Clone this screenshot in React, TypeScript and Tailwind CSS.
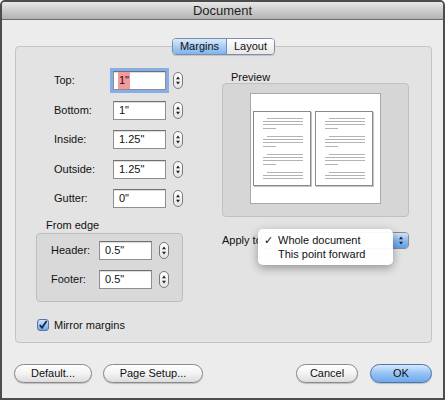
import React from "react";

function Stepper({ blue = false }: { blue?: boolean }) {
  return (
    <div
      className={
        blue
          ? "w-[16px] h-full flex items-center justify-center bg-linear-to-b from-[#cfe2f8] via-[#8cbaf0] to-[#5f9deb] border-l border-[#5d82b9]"
          : "w-[10px] h-[17px] rounded-[5px] border border-[#7a7a7a] bg-linear-to-b from-white to-[#e4e4e4] flex items-center justify-center shrink-0"
      }
    >
      <svg width="6" height="11" viewBox="0 0 6 11">
        <path d="M3 1.5 L5 4.2 L1 4.2 Z" fill="#222" />
        <path d="M3 9.5 L5 6.8 L1 6.8 Z" fill="#222" />
      </svg>
    </div>
  );
}

function Field({
  value,
  width = "w-[53px]",
  focused = false,
}: {
  value: string;
  width?: string;
  focused?: boolean;
}) {
  return (
    <div
      className={
        width +
        " h-[19px] bg-white border border-[#8f8f8f] border-t-[#6f6f6f] shadow-[inset_0_1px_1px_rgba(0,0,0,0.15)] flex items-center pl-[5px] text-[11px] text-[#111] shrink-0 " +
        (focused ? "ring-[3px] ring-[#85aee8] border-[#6d91c9]" : "")
      }
    >
      {focused ? <span className="bg-[#f29b9a] px-[1px] -ml-[1px]">{value}</span> : value}
    </div>
  );
}

function MarginRow({ label, value, focused }: { label: string; value: string; focused?: boolean }) {
  return (
    <div className="flex items-center">
      <span className="w-[59px] text-[11px] text-[#111]">{label}</span>
      <Field value={value} focused={focused} />
      <div className="ml-[7px]">
        <Stepper />
      </div>
    </div>
  );
}

function EdgeRow({ label, value }: { label: string; value: string }) {
  return (
    <div className="flex items-center">
      <span className="w-[48px] text-[11px] text-[#111]">{label}</span>
      <Field value={value} />
      <div className="ml-[7px]">
        <Stepper />
      </div>
    </div>
  );
}

function PageThumb() {
  const paras = [0, 18, 36, 54];
  return (
    <div className="w-[58px] h-[75px] bg-white border border-[#8a8a8a] shadow-[1px_1px_0_#c4c4c4]">
      <svg width="56" height="73" viewBox="0 0 56 73">
        {paras.map((y, i) => (
          <g key={i} stroke="#b3b3b3" strokeWidth="1">
            <line x1="13" y1={y + 6.5} x2="49" y2={y + 6.5} />
            <line x1="9" y1={y + 9.5} x2="49" y2={y + 9.5} />
            <line x1="9" y1={y + 12.5} x2="49" y2={y + 12.5} />
            {i < 3 && <line x1="9" y1={y + 16.5} x2="22" y2={y + 16.5} />}
          </g>
        ))}
      </svg>
    </div>
  );
}

function AquaButton({ label, width, primary = false }: { label: string; width: string; primary?: boolean }) {
  return (
    <div
      className={
        width +
        " h-[19px] rounded-full flex items-center justify-center text-[11px] text-[#111] shadow-[0_1px_1px_rgba(0,0,0,0.2)] " +
        (primary
          ? "border border-[#4f74ad] bg-linear-to-b from-[#d9e9fb] via-[#93c1f3] to-[#6fa9ee]"
          : "border border-[#8a8a8a] bg-linear-to-b from-white via-[#f3f3f3] to-[#dcdcdc]")
      }
    >
      {label}
    </div>
  );
}

export default function App() {
  return (
    <div className="w-[445px] h-[400px] border-2 border-[#4d4d4d] rounded-t-[5px] flex flex-col overflow-hidden font-['Liberation_Sans',Arial,sans-serif] box-border">
      {/* Title bar */}
      <div className="h-[18px] shrink-0 bg-linear-to-b from-[#e8e8e8] to-[#b2b2b2] border-b border-[#6c6c6c] flex items-center justify-center">
        <span className="text-[13px] text-[#1e1e1e]">Document</span>
      </div>

      {/* Body */}
      <div className="flex-1 bg-[#ececec] flex flex-col pt-[18px]">
        {/* Tabs */}
        <div className="relative z-10 flex justify-center pl-[2px]">
          <div className="flex h-[17px] rounded-[4px] overflow-hidden border border-[#7d8ea8] shadow-[0_1px_1px_rgba(0,0,0,0.15)] text-[11px] text-[#111]">
            <div className="w-[54px] flex items-center justify-center bg-linear-to-b from-[#dbeafb] via-[#a8cdf5] to-[#7fb4ef] border-r border-[#6f8fbf]">
              Margins
            </div>
            <div className="w-[47px] flex items-center justify-center bg-linear-to-b from-white to-[#e6e6e6]">
              Layout
            </div>
          </div>
        </div>

        {/* Tab box */}
        <div className="ml-[13px] -mt-[9px] w-[417px] h-[297px] bg-[#e3e3e3] border border-[#c4c4c4] rounded-[4px] flex">
          {/* Left column */}
          <div className="w-[206px] pl-[20px] pt-[24px] flex flex-col">
            <div className="ml-[18px] flex flex-col gap-[10.5px]">
              <MarginRow label="Top:" value={'1"'} focused />
              <MarginRow label="Bottom:" value={'1"'} />
              <MarginRow label="Inside:" value={'1.25"'} />
              <MarginRow label="Outside:" value={'1.25"'} />
              <MarginRow label="Gutter:" value={'0"'} />
            </div>

            <span className="mt-[11px] ml-[10px] text-[11px] leading-[13px] text-[#111]">From edge</span>
            <div className="mt-[1px] w-[147px] h-[69px] bg-[#d9d9d9] border border-[#bdbdbd] rounded-[4px] pl-[14px] pt-[7px] flex flex-col gap-[10px]">
              <EdgeRow label="Header:" value={'0.5"'} />
              <EdgeRow label="Footer:" value={'0.5"'} />
            </div>

            <div className="mt-[15px] ml-[1px] flex items-center gap-[5px]">
              <div className="w-[12px] h-[12px] rounded-[3px] border border-[#5576a6] bg-linear-to-b from-[#cfe2f8] to-[#6ea6ec] flex items-center justify-center">
                <svg width="10" height="10" viewBox="0 0 10 10">
                  <path d="M1.8 5 L4 7.8 L8.6 1" fill="none" stroke="#1b2a44" strokeWidth="1.8" />
                </svg>
              </div>
              <span className="text-[11px] text-[#111]">Mirror margins</span>
            </div>
          </div>

          {/* Right column */}
          <div className="pt-[24px] flex flex-col">
            <span className="pl-[9px] text-[11px] leading-[12px] text-[#111]">Preview</span>
            <div className="w-[187px] h-[134px] bg-[#d6d6d6] border border-[#c0c0c0] rounded-[4px] flex justify-center pt-[9px]">
              <div className="w-[131px] h-[111px] bg-white border border-[#a9a9a9] flex gap-[4px] pl-[2px] pt-[17px]">
                <PageThumb />
                <PageThumb />
              </div>
            </div>

            <div className="relative mt-[15px] flex items-center h-[17px]">
              <span className="text-[11px] text-[#111] w-[39px] shrink-0 whitespace-nowrap">Apply to:</span>
              <div className="w-[148px] h-[17px] rounded-[4px] border border-[#8a8a8a] bg-white flex justify-end overflow-hidden">
                <Stepper blue />
              </div>

              {/* Popup menu */}
              <div className="absolute left-[36px] top-[-3px] w-[135px] h-[36px] bg-white/95 rounded-[5px] shadow-[0_3px_10px_rgba(0,0,0,0.35)] pt-[4px] text-[11px] text-[#111]">
                <div className="h-[14px] flex items-center">
                  <span className="w-[20px] pl-[6px]">✓</span>
                  <span>Whole document</span>
                </div>
                <div className="h-[14px] flex items-center">
                  <span className="w-[20px]" />
                  <span>This point forward</span>
                </div>
              </div>
            </div>
          </div>
        </div>

        {/* Bottom buttons */}
        <div className="mt-[21px] px-[12px] flex items-center">
          <AquaButton label="Default..." width="w-[78px]" />
          <div className="ml-[11px]">
            <AquaButton label="Page Setup..." width="w-[100px]" />
          </div>
          <div className="ml-auto mr-[-1px] flex gap-[12px]">
            <AquaButton label="Cancel" width="w-[62px]" />
            <AquaButton label="OK" width="w-[62px]" primary />
          </div>
        </div>
      </div>
    </div>
  );
}
